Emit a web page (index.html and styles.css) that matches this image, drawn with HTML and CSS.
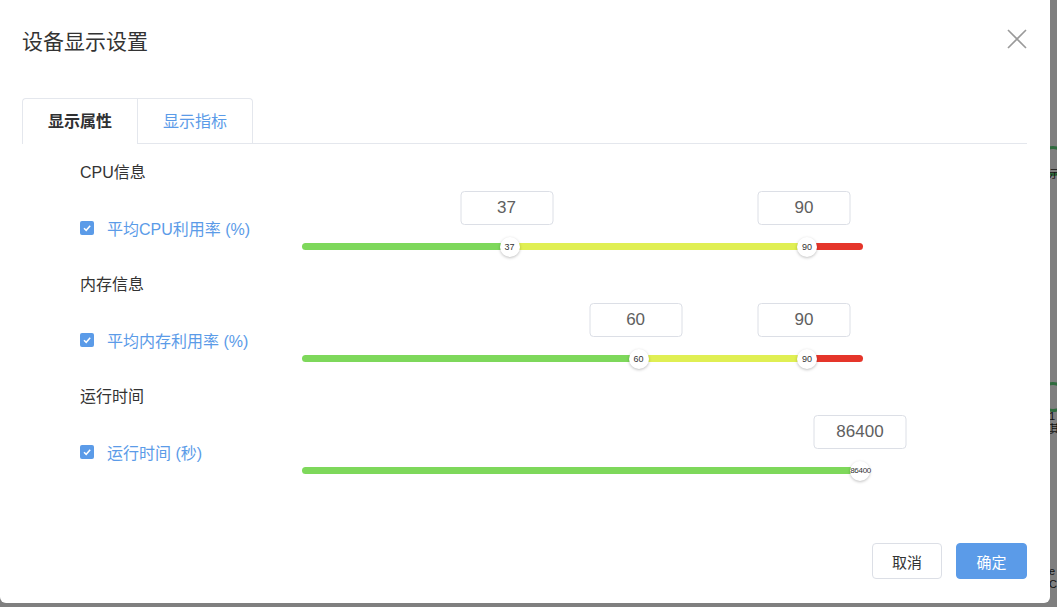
FILE: index.html
```html
<!DOCTYPE html>
<html lang="zh-CN">
<head>
    <meta charset="UTF-8">
    <meta name="viewport" content="width=device-width, initial-scale=1.0">
    <title>设备显示设置</title>
    <link rel="stylesheet" href="styles.css">
</head>
<body>
    <div class="page-behind">
        <span class="node node-a"></span>
        <span class="node-text text-a">示</span>
        <span class="node node-b"></span>
        <span class="node-text text-b">1<br>其</span>
        <span class="node-text text-c">e<br>C</span>
    </div>

    <div class="dialog">
        <div class="dialog-header">
            <span class="dialog-title">设备显示设置</span>
            <span class="dialog-close">
                <svg width="20" height="20" viewBox="0 0 20 20"><path d="M1 1 L19 19 M19 1 L1 19" stroke="#9a9a9a" stroke-width="1.6" fill="none"/></svg>
            </span>
        </div>

        <div class="dialog-body">
            <div class="tabs">
                <div class="tab active">显示属性</div>
                <div class="tab link">显示指标</div>
            </div>

            <div class="group">
                <div class="group-title">CPU信息</div>
                <div class="group-row">
                    <label class="check">
                        <span class="check-box"><svg width="10" height="10" viewBox="0 0 10 10"><path d="M2 5.2 L4.2 7.3 L8.2 2.8" stroke="#fff" stroke-width="1.5" fill="none"/></svg></span>
                        平均CPU利用率 (%)
                    </label>
                    <div class="slider">
                        <input class="value-input" style="left: 37%" value="37">
                        <input class="value-input" style="left: 90%" value="90">
                        <div class="track">
                            <span class="seg green" style="width: 37%"></span>
                            <span class="seg yellow" style="width: 53%"></span>
                            <span class="seg red" style="width: 10%"></span>
                            <span class="thumb" style="left: 37%">37</span>
                            <span class="thumb" style="left: 90%">90</span>
                        </div>
                    </div>
                </div>
            </div>

            <div class="group">
                <div class="group-title">内存信息</div>
                <div class="group-row">
                    <label class="check">
                        <span class="check-box"><svg width="10" height="10" viewBox="0 0 10 10"><path d="M2 5.2 L4.2 7.3 L8.2 2.8" stroke="#fff" stroke-width="1.5" fill="none"/></svg></span>
                        平均内存利用率 (%)
                    </label>
                    <div class="slider">
                        <input class="value-input" style="left: 60%" value="60">
                        <input class="value-input" style="left: 90%" value="90">
                        <div class="track">
                            <span class="seg green" style="width: 60%"></span>
                            <span class="seg yellow" style="width: 30%"></span>
                            <span class="seg red" style="width: 10%"></span>
                            <span class="thumb" style="left: 60%">60</span>
                            <span class="thumb" style="left: 90%">90</span>
                        </div>
                    </div>
                </div>
            </div>

            <div class="group">
                <div class="group-title">运行时间</div>
                <div class="group-row">
                    <label class="check">
                        <span class="check-box"><svg width="10" height="10" viewBox="0 0 10 10"><path d="M2 5.2 L4.2 7.3 L8.2 2.8" stroke="#fff" stroke-width="1.5" fill="none"/></svg></span>
                        运行时间 (秒)
                    </label>
                    <div class="slider">
                        <input class="value-input wide" style="left: 100%" value="86400">
                        <div class="track">
                            <span class="seg green full" style="width: 100%"></span>
                            <span class="thumb small-text" style="left: 99.5%">86400</span>
                        </div>
                    </div>
                </div>
            </div>
        </div>

        <div class="dialog-footer">
            <button class="btn">取消</button>
            <button class="btn primary">确定</button>
        </div>
    </div>
</body>
</html>
```

FILE: styles.css
```css
body {
    margin: 0;
    padding: 0;
    width: 1057px;
    height: 607px;
    overflow: hidden;
    background-color: #7f7f7f;
    font-family: "Liberation Sans", "Noto Sans CJK SC", sans-serif;
    color: #333;
    position: relative;
}
.page-behind {
    position: absolute;
    top: 0;
    left: 0;
    width: 100%;
    height: 100%;
}
.node {
    position: absolute;
    width: 24px;
    height: 24px;
    border-radius: 50%;
    border: 3px solid #2f6b3e;
    background: #7f7f7f;
}
.node-a {
    left: 1038px;
    top: 146px;
}
.node-b {
    left: 1038px;
    top: 382px;
}
.node-text {
    position: absolute;
    left: 1049px;
    font-size: 11px;
    line-height: 13px;
    color: #111;
}
.text-a {
    top: 168px;
}
.text-b {
    top: 410px;
}
.text-c {
    top: 565px;
}
.dialog {
    position: relative;
    width: 1050px;
    height: 603px;
    background: #fff;
    border-radius: 0 0 6px 6px;
    display: flex;
    flex-direction: column;
    box-sizing: border-box;
}
.dialog-header {
    height: 80px;
    padding: 0 22px;
    display: flex;
    align-items: center;
    justify-content: space-between;
}
.dialog-title {
    font-size: 21px;
    color: #333;
}
.dialog-close {
    display: flex;
    margin-right: 1px;
    margin-top: -3px;
    cursor: pointer;
}
.dialog-body {
    padding: 18px 23px 0 22px;
}
.tabs {
    display: flex;
    height: 45px;
    border-bottom: 1px solid #e4e7ed;
}
.tab {
    padding: 0 25px;
    font-size: 16px;
    line-height: 45px;
    border: 1px solid #e4e7ed;
    border-bottom: none;
    box-sizing: border-box;
    height: 46px;
    background: #fff;
}
.tab.active {
    color: #303133;
    font-weight: 600;
    border-radius: 4px 0 0 0;
    border-right: none;
}
.tab.link {
    color: #5b9be8;
    border-radius: 0 4px 0 0;
    height: 45px;
}
.group {
    height: 112px;
    padding-left: 58px;
}
.tabs + .group {
    margin-top: 18px;
}
.group-title {
    font-size: 16px;
    line-height: 22px;
    color: #333;
}
.group-row {
    display: flex;
    align-items: center;
    height: 90px;
}
.check {
    width: 222px;
    display: flex;
    align-items: center;
    font-size: 16px;
    color: #5b9be8;
    margin-top: -2px;
}
.check-box {
    width: 14px;
    height: 14px;
    border-radius: 2px;
    background: #5b9be8;
    margin-right: 13px;
    display: flex;
    align-items: center;
    justify-content: center;
}
.slider {
    position: relative;
    width: 561px;
    height: 90px;
}
.value-input {
    position: absolute;
    top: 7px;
    width: 93px;
    height: 34px;
    box-sizing: border-box;
    transform: translateX(-50%);
    margin-left: -3px;
    border: 1px solid #dcdfe6;
    border-radius: 4px;
    text-align: center;
    font-family: "Liberation Sans", sans-serif;
    font-size: 17px;
    color: #606060;
    padding: 0;
    outline: none;
}
.track {
    position: relative;
    margin-top: 59px;
    height: 7px;
    display: flex;
    border-radius: 4px;
}
.seg {
    height: 7px;
    display: block;
}
.green {
    background: #7ed85b;
    border-radius: 4px 0 0 4px;
}
.green.full {
    border-radius: 4px;
}
.yellow {
    background: #e0ef53;
}
.red {
    background: #e5352a;
    border-radius: 0 4px 4px 0;
}
.thumb {
    position: absolute;
    top: 50%;
    width: 20px;
    height: 20px;
    transform: translate(-50%, -50%);
    border-radius: 50%;
    background: #fff;
    box-shadow: 0 1px 3px rgba(0, 0, 0, 0.25);
    font-size: 9px;
    line-height: 20px;
    text-align: center;
    color: #333;
}
.thumb.small-text {
    font-size: 8px;
    letter-spacing: -0.3px;
}
.dialog-footer {
    margin-top: auto;
    padding: 0 23px 24px 0;
    display: flex;
    justify-content: flex-end;
    gap: 14px;
}
.btn {
    height: 36px;
    width: 70px;
    border: 1px solid #dcdfe6;
    border-radius: 4px;
    background: #fff;
    font-family: "Liberation Sans", "Noto Sans CJK SC", sans-serif;
    font-size: 15px;
    color: #333;
    cursor: pointer;
}
.btn.primary {
    width: 71px;
    background: #5b9be8;
    border-color: #5b9be8;
    color: #fff;
}
```
